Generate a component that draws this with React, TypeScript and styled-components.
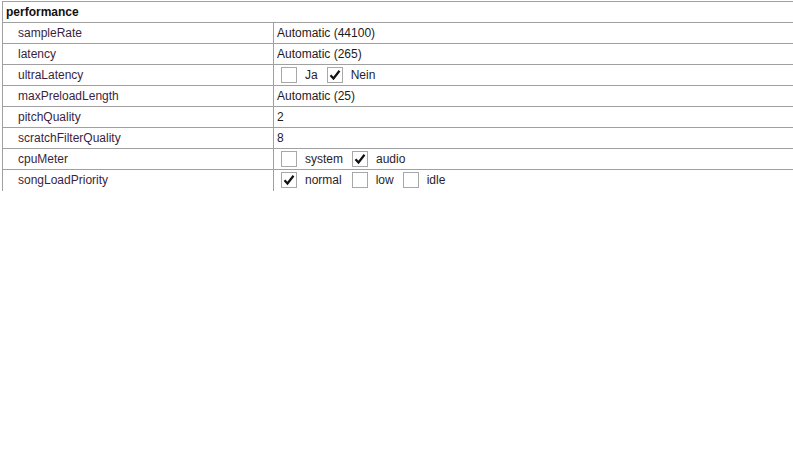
import React from "react";
import styled, { createGlobalStyle } from "styled-components";

const Global = createGlobalStyle`
  html, body { margin: 0; padding: 0; background: #ffffff; }
  body { font-family: "Liberation Sans", Arial, sans-serif; font-size: 12px; }
`;

const Wrap = styled.div`
  padding: 1px 1px 0 2px;
  width: 790px;
`;

const Table = styled.table`
  border-collapse: collapse;
  width: 791px;
  table-layout: fixed;
`;

const Tr = styled.tr`
  height: 21px;
`;

const HeaderCell = styled.td`
  border-top: 1px solid #a0a0a0;
  border-left: 1px solid #a0a0a0;
  padding: 0 0 0 3px;
  height: 20px;
  font-weight: bold;
  color: #111;
  font-size: 12px;
`;

const NameCell = styled.td`
  width: 270px;
  border-top: 1px solid #a0a0a0;
  border-left: 1px solid #a0a0a0;
  border-right: 1px solid #a0a0a0;
  padding: 0 0 0 15px;
  height: 20px;
  color: #3a1f3f;
  white-space: nowrap;
`;

const ValueCell = styled.td`
  border-top: 1px solid #a0a0a0;
  padding: 0 0 0 3px;
  height: 20px;
  color: #1e1a1e;
  white-space: nowrap;
`;

const Options = styled.div`
  display: flex;
  align-items: center;
  padding-left: 4px;
`;

const Box = styled.span`
  box-sizing: border-box;
  width: 16px;
  height: 16px;
  border: 1px solid #a8a8a8;
  background: #fff;
  display: inline-flex;
  align-items: center;
  justify-content: center;
`;

const OptLabel = styled.span<{ $gap: number }>`
  margin-left: 8px;
  margin-right: ${(p) => p.$gap}px;
  color: #2a1d2c;
`;

const Check = () => (
  <svg width="12" height="12" viewBox="0 0 12 12">
    <path d="M1.5 6.2 L4.5 9.5 L10.5 1.8" fill="none" stroke="#111" strokeWidth="2.2" />
  </svg>
);

type Opt = { label: string; checked: boolean; gap: number };

const rows: { name: string; value?: string; opts?: Opt[] }[] = [
  { name: "sampleRate", value: "Automatic (44100)" },
  { name: "latency", value: "Automatic (265)" },
  {
    name: "ultraLatency",
    opts: [
      { label: "Ja", checked: false, gap: 9 },
      { label: "Nein", checked: true, gap: 0 },
    ],
  },
  { name: "maxPreloadLength", value: "Automatic (25)" },
  { name: "pitchQuality", value: "2" },
  { name: "scratchFilterQuality", value: "8" },
  {
    name: "cpuMeter",
    opts: [
      { label: "system", checked: false, gap: 9 },
      { label: "audio", checked: true, gap: 0 },
    ],
  },
  {
    name: "songLoadPriority",
    opts: [
      { label: "normal", checked: true, gap: 10 },
      { label: "low", checked: false, gap: 9 },
      { label: "idle", checked: false, gap: 0 },
    ],
  },
];

export default function App() {
  return (
    <Wrap>
      <Global />
      <Table>
        <colgroup>
          <col style={{ width: 271 }} />
          <col />
        </colgroup>
        <tbody>
          <Tr>
            <HeaderCell colSpan={2}>performance</HeaderCell>
          </Tr>
          {rows.map((r) => (
            <Tr key={r.name}>
              <NameCell>{r.name}</NameCell>
              <ValueCell>
                {r.opts ? (
                  <Options>
                    {r.opts.map((o) => (
                      <React.Fragment key={o.label}>
                        <Box>{o.checked ? <Check /> : null}</Box>
                        <OptLabel $gap={o.gap}>{o.label}</OptLabel>
                      </React.Fragment>
                    ))}
                  </Options>
                ) : (
                  r.value
                )}
              </ValueCell>
            </Tr>
          ))}
        </tbody>
      </Table>
    </Wrap>
  );
}
